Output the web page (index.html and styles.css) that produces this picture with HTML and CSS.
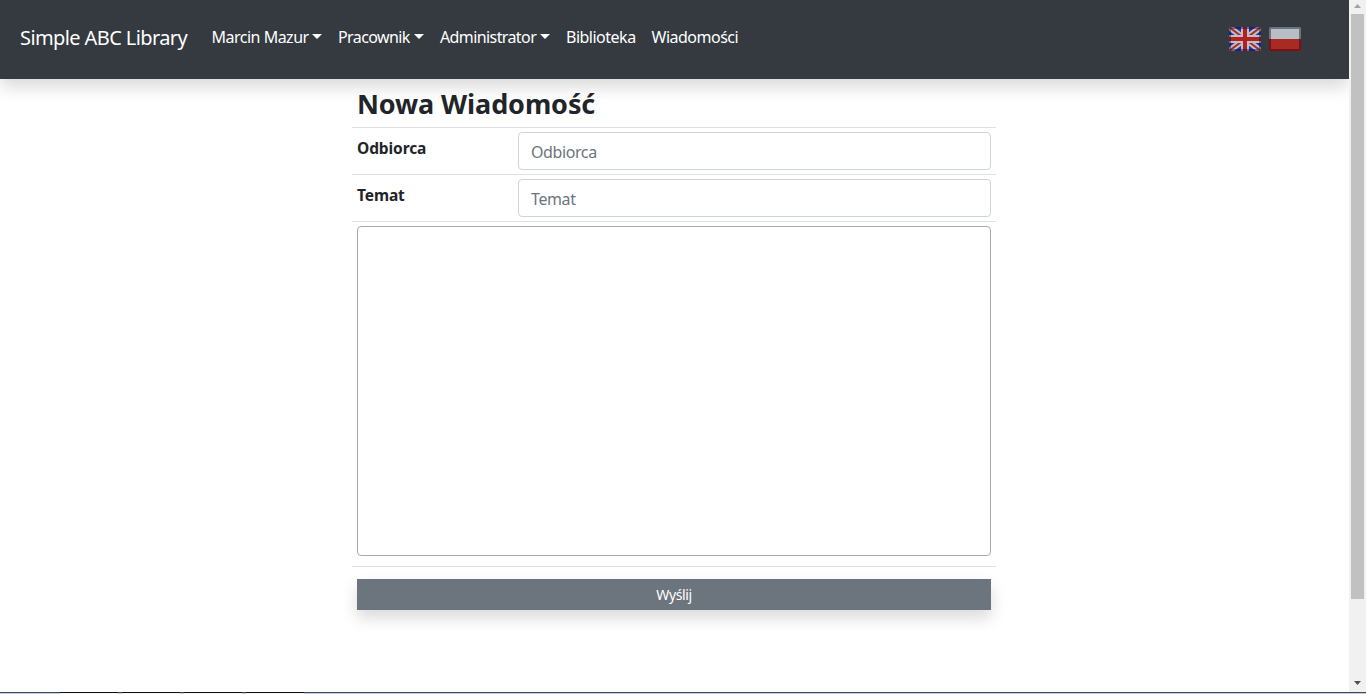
FILE: index.html
```html
<!DOCTYPE html>
<html lang="pl">
<head>
<meta charset="utf-8">
<title>Simple ABC Library</title>
<link rel="stylesheet" href="styles.css">
</head>
<body>
<div class="window">
  <div class="page">
    <nav class="navbar">
      <a class="brand">Simple ABC Library</a>
      <a class="link link-user"><span>Marcin Mazur</span><i class="caret"></i></a>
      <a class="link link-staff"><span>Pracownik</span><i class="caret"></i></a>
      <a class="link link-admin"><span>Administrator</span><i class="caret"></i></a>
      <a class="link link-library"><span>Biblioteka</span></a>
      <a class="link link-messages"><span>Wiadomości</span></a>
      <div class="flags">
        <svg class="flag" viewBox="0 0 32 24">
          <rect width="32" height="24" rx="1.5" fill="#2a2f9c"/>
          <path d="M0 0L32 24M32 0L0 24" stroke="#bcc0c8" stroke-width="6"/>
          <path d="M0 0L32 24M32 0L0 24" stroke="#b02a2a" stroke-width="2"/>
          <path d="M16 0V24M0 12H32" stroke="#bcc0c8" stroke-width="8"/>
          <path d="M16 0V24M0 12H32" stroke="#b32020" stroke-width="4"/>
          <rect x="1" y="1" width="30" height="22" rx="1" fill="none" stroke="#101040" stroke-opacity=".45" stroke-width="2"/>
        </svg>
        <svg class="flag" viewBox="0 0 32 24">
          <rect width="32" height="24" rx="1.5" fill="#68747f"/>
          <path d="M0 12H32V22.5Q32 24 30.500 24H1.500Q0 24 0 22.500Z" fill="#7c1012"/>
          <rect x="2" y="2" width="28" height="10" fill="#b9bec5"/>
          <rect x="2" y="12" width="28" height="10" fill="#a82a24"/>
        </svg>
      </div>
    </nav>
    <main class="message">
      <h1 class="title"><span>Nowa Wiadomość</span></h1>
      <div class="row"><label class="label label-to">Odbiorca</label><input class="field" placeholder="Odbiorca"></div>
      <div class="row"><label class="label label-subject">Temat</label><input class="field field-subject" placeholder="Temat"></div>
      <div class="row row-body"><textarea class="body-text"></textarea></div>
      <div class="row row-send"><button class="send">Wyślij</button></div>
    </main>
  </div>
  <div class="scrollbar">
    <svg class="arrow" viewBox="0 0 17 14"><path d="M5 8H12L8.500 4Z" fill="#a3a3a3"/></svg>
    <div class="thumb"></div>
    <svg class="arrow arrow-down" viewBox="0 0 17 17"><path d="M5 6H12L8.500 10Z" fill="#505050"/></svg>
  </div>
</div>
<div class="taskbar"><i class="task task-first"></i><i class="task"></i><i class="task"></i><i class="task"></i></div>
</body>
</html>
```
FILE: styles.css
```css
* { box-sizing: border-box; }
body { margin: 0; height: 694px; overflow: hidden; background: #fff; color: #212529; font: 16px/24px "Noto Sans", sans-serif; }
.window { display: flex; height: 692px; }
.page { width: 1349px; }
.navbar { display: flex; align-items: center; height: 79px; padding: 0 48px 4px 20px; background: #343a40; color: #fff; box-shadow: 0 8px 16px rgba(0,0,0,.15); }
.brand { width: 191.500px; font-size: 20px; line-height: 30px; letter-spacing: -.6px; white-space: nowrap; }
.link { display: flex; align-items: center; margin-right: 16px; padding-bottom: 2px; white-space: nowrap; letter-spacing: -.5px; }
.link-user { width: 110.500px; }
.link-staff { width: 86px; letter-spacing: -.6px; }
.link-admin { width: 110px; letter-spacing: -.6px; }
.link-library { width: 69.500px; }
.caret { margin-left: auto; width: 10px; border: 5px solid transparent; border-top-color: #fff; border-bottom: 0; }
.flags { display: flex; gap: 8px; margin: 3px 0 0 auto; }
.flag { display: block; width: 32px; height: 24px; }
.message { width: 644px; margin-left: 352px; }
.title { height: 48px; margin: 0; padding: 4px 5px; font-size: 27px; line-height: 42px; font-weight: 700; letter-spacing: -.1px; white-space: nowrap; }
.row { display: flex; height: 47px; padding: 4px 5px; border-top: 1px solid #dee2e6; }
.label { width: 161px; padding-top: 4px; font-weight: 700; font-size: 15.500px; letter-spacing: -.1px; }
.field { width: 473px; height: 38px; padding: 8px 12px 6px; border: 1px solid #ced4da; border-radius: 4px; background: #fff; font: inherit; letter-spacing: -.4px; }
.field::placeholder { color: #6c757d; opacity: 1; }
.row-body { height: 345px; }
.body-text { display: block; width: 634px; height: 330px; border: 1px solid #a9a9a9; border-radius: 4px; resize: none; }
.row-send { height: 56px; padding-top: 12px; }
.send { width: 634px; height: 31px; padding: 0; border: 0; background: #6c757d; color: #fff; font: 14px/21px "Noto Sans", sans-serif; letter-spacing: -.4px; box-shadow: 0 8px 16px rgba(0,0,0,.15); }
.scrollbar { display: flex; flex-direction: column; align-items: center; width: 17px; background: #f1f1f1; }
.arrow { width: 17px; height: 14px; }
.thumb { width: 13px; height: 585px; background: #c1c1c1; }
.arrow-down { height: 17px; margin-top: auto; }
.taskbar { display: flex; gap: 4px; height: 2px; padding-left: 60px; border-top: 1px solid #3c4856; background: #c1d0df; }
.task { width: 58px; height: 2px; margin-top: -1px; border-top: 1px solid #111; background: #f4f6f8; }
```
